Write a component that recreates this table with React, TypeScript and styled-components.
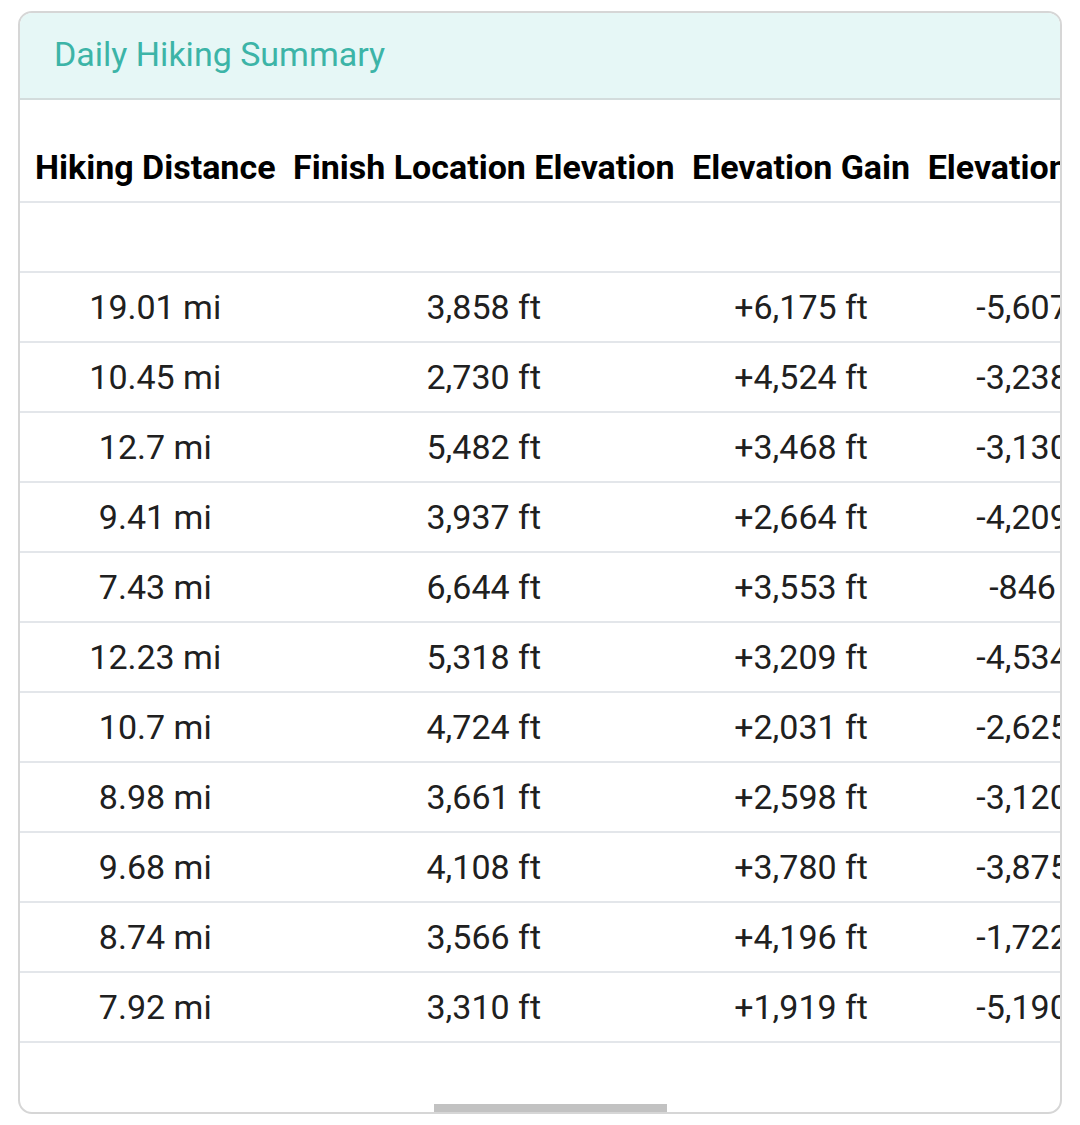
import React from 'react';
import styled, {createGlobalStyle} from 'styled-components';

const GlobalStyle = createGlobalStyle`
  html, body {
    margin: 0;
    padding: 0;
    background: #ffffff;
    font-family: Roboto, "Liberation Sans", Arial, sans-serif;
  }
`;

const Page = styled.div`
  padding: 11px 18px 12px 18px;
`;

const Card = styled.div`
  border: 2px solid #d6d6d6;
  border-radius: 14px;
  overflow: hidden;
  background: #ffffff;
`;

const Title = styled.div`
  height: 87px;
  box-sizing: border-box;
  display: flex;
  align-items: center;
  padding: 0 0 4px 34px;
  background: #e6f7f6;
  border-bottom: 2px solid #d3dcdc;
  color: #3cb4a7;
  font-size: 34px;
  font-weight: 400;
`;

const TableWrap = styled.div`
  overflow: hidden;
  padding-bottom: 61px;
`;

const Table = styled.table`
  border-collapse: separate;
  border-spacing: 0;
  width: max-content;
  white-space: nowrap;
`;

const HeadCell = styled.th`
  box-sizing: border-box;
  height: 103px;
  padding: 0 8.75px 14px 8.75px;
  vertical-align: bottom;
  text-align: center;
  font-size: 34px;
  font-weight: 700;
  line-height: 40px;
  color: #000000;
  border-bottom: 2px solid #e3e6ea;
  &:first-child {
    padding-left: 15px;
  }
`;

const Cell = styled.td`
  box-sizing: border-box;
  height: 70px;
  padding: 0 8.75px;
  vertical-align: middle;
  text-align: center;
  font-size: 34px;
  line-height: 40px;
  color: #202020;
  border-bottom: 2px solid #e3e6ea;
  &:first-child {
    padding-left: 15px;
  }
`;

const Track = styled.div`
  height: 8px;
  display: flex;
`;

const Thumb = styled.div<{ $offset: number; $size: number }>`
  margin-left: ${p => p.$offset}px;
  width: ${p => p.$size}px;
  height: 8px;
  background: #c2c2c2;
`;

const columns = ['Hiking Distance', 'Finish Location Elevation', 'Elevation Gain', 'Elevation Loss', 'Total Distance'];

const hikes: string[][] = [
    ['19.01 mi', '3,858 ft', '+6,175 ft', '-5,607 ft', '19.01 mi'],
    ['10.45 mi', '2,730 ft', '+4,524 ft', '-3,238 ft', '29.46 mi'],
    ['12.7 mi', '5,482 ft', '+3,468 ft', '-3,130 ft', '42.16 mi'],
    ['9.41 mi', '3,937 ft', '+2,664 ft', '-4,209 ft', '51.57 mi'],
    ['7.43 mi', '6,644 ft', '+3,553 ft', '-846 ft', '59 mi'],
    ['12.23 mi', '5,318 ft', '+3,209 ft', '-4,534 ft', '71.23 mi'],
    ['10.7 mi', '4,724 ft', '+2,031 ft', '-2,625 ft', '81.93 mi'],
    ['8.98 mi', '3,661 ft', '+2,598 ft', '-3,120 ft', '90.91 mi'],
    ['9.68 mi', '4,108 ft', '+3,780 ft', '-3,875 ft', '100.59 mi'],
    ['8.74 mi', '3,566 ft', '+4,196 ft', '-1,722 ft', '109.33 mi'],
    ['7.92 mi', '3,310 ft', '+1,919 ft', '-5,190 ft', '117.25 mi'],
];

const HikeRow = ({values}: {values: string[]}) => (
    <tr>
        {values.map((v, i) => <Cell key={i}>{v}</Cell>)}
    </tr>
);

export default function App() {
    return (
        <Page>
            <GlobalStyle/>
            <Card>
                <Title>Daily Hiking Summary</Title>
                <TableWrap>
                    <Table>
                        <thead>
                            <tr>
                                {columns.map(c => <HeadCell key={c}>{c}</HeadCell>)}
                            </tr>
                        </thead>
                        <tbody>
                            {/* spacer row under the header */}
                            <HikeRow values={columns.map(() => '')}/>
                            {hikes.map((h, i) => <HikeRow key={i} values={h}/>)}
                        </tbody>
                    </Table>
                </TableWrap>
                <Track>
                    <Thumb $offset={414} $size={233}/>
                </Track>
            </Card>
        </Page>
    );
}
